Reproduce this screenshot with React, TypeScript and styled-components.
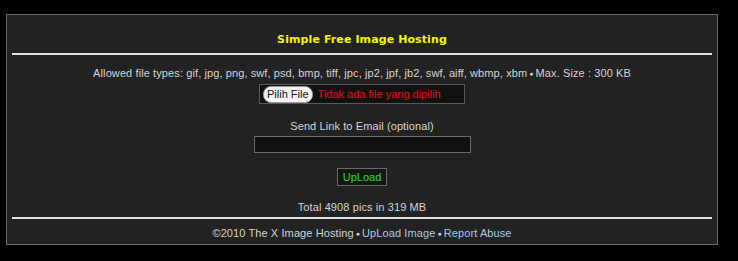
import React from 'react';
import styled, { createGlobalStyle } from 'styled-components';

const GlobalStyle = createGlobalStyle`
  html, body {
    margin: 0;
    padding: 0;
    background: #000;
  }
  body {
    font-family: Tahoma, "DejaVu Sans", "Liberation Sans", sans-serif;
    font-size: 11px;
    color: #d0d0d0;
  }
`;

const Page = styled.div`
  width: 738px;
  height: 261px;
  padding: 14px 0 0 6px;
  box-sizing: border-box;
`;

const Panel = styled.div`
  width: 712px;
  height: 231px;
  box-sizing: border-box;
  background: #222222;
  border: 1px solid #6a6a6a;
  padding: 0 5px;
  display: flex;
  flex-direction: column;
  align-items: center;
  font-family: "Liberation Sans", Arial, sans-serif;
`;

const Title = styled.h1`
  margin: 16px 0 0;
  height: 22px;
  font-family: "DejaVu Sans", Verdana, sans-serif;
  font-size: 11px;
  line-height: 14px;
  padding-top: 2px;
  box-sizing: border-box;
  font-weight: bold;
  letter-spacing: 0.1px;
  color: #f5f500;
`;

const Rule = styled.hr<{ $top: number }>`
  align-self: stretch;
  margin: ${(p) => p.$top}px 0 0;
  border: 0;
  height: 2px;
  background: #e0e0e0;
`;

const Line = styled.p<{ $top: number }>`
  margin: ${(p) => p.$top}px 0 0;
  line-height: 14px;
  font-size: 11px;
  letter-spacing: 0.1px;
  color: #d4d4d4;
  white-space: nowrap;
`;

const Dot = styled.span`
  font-size: 7px;
  margin: 0 2px;
  vertical-align: 1px;
`;

const FileBox = styled.div`
  margin-top: 3px;
  width: 206px;
  height: 20px;
  box-sizing: border-box;
  border: 1px solid #5a5a5a;
  background: #111;
  display: flex;
  align-items: center;
  padding-left: 3px;
  gap: 5px;
`;

const PickButton = styled.span`
  height: 15px;
  padding: 0 3px;
  border-radius: 8px;
  background: #f4f4f4;
  border: 1px solid #999;
  color: #111;
  font-size: 11px;
  line-height: 15px;
`;

const NoFile = styled.span`
  color: #e01010;
  font-size: 11px;
`;

const EmailInput = styled.div`
  margin-top: 3px;
  width: 217px;
  height: 17px;
  box-sizing: border-box;
  border: 1px solid #6a6a6a;
  background: #111;
`;

const UploadButton = styled.button`
  margin-top: 15px;
  height: 18px;
  padding: 0 5px;
  background: #151515;
  border: 1px solid #6a6a6a;
  color: #20e020;
  font-family: "Liberation Sans", Arial, sans-serif;
  font-size: 11px;
  line-height: 14px;
`;

const Link = styled.a`
  color: #a8c8f0;
  text-decoration: none;
`;

export default function App() {
  return (
    <>
      <GlobalStyle />
      <Page>
        <Panel>
          <Title>Simple Free Image Hosting</Title>
          <Rule $top={0} />
          <Line $top={11}>
            Allowed file types: gif, jpg, png, swf, psd, bmp, tiff, jpc, jp2, jpf, jb2, swf, aiff, wbmp, xbm
            <Dot>●</Dot>Max. Size : 300 KB
          </Line>
          <FileBox>
            <PickButton>Pilih File</PickButton>
            <NoFile>Tidak ada file yang dipilih</NoFile>
          </FileBox>
          <Line $top={15}>Send Link to Email (optional)</Line>
          <EmailInput />
          <UploadButton type="button">UpLoad</UploadButton>
          <Line $top={14}>Total 4908 pics in 319 MB</Line>
          <Rule $top={3} />
          <Line $top={7}>
            ©2010 The X Image Hosting<Dot>●</Dot>
            <Link href="#">UpLoad Image</Link>
            <Dot>●</Dot>
            <Link href="#">Report Abuse</Link>
          </Line>
        </Panel>
      </Page>
    </>
  );
}
